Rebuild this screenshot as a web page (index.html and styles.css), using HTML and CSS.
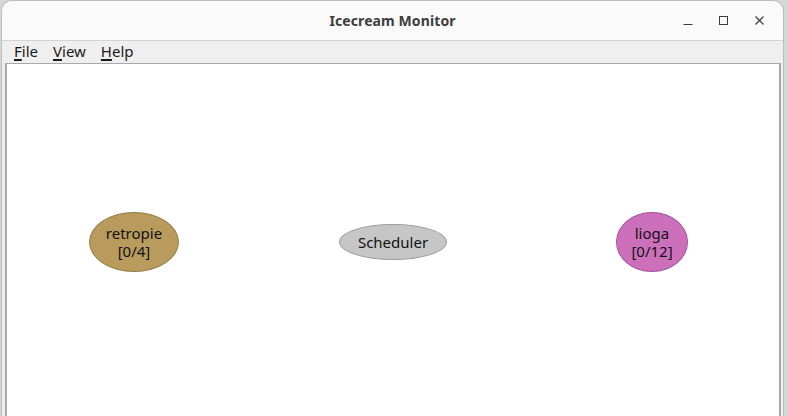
FILE: index.html
```html
<!DOCTYPE html>
<html>
<head>
<meta charset="utf-8">
<link rel="stylesheet" href="styles.css">
</head>
<body>
<div class="window">
  <div class="titlebar">
    <div class="title">Icecream Monitor</div>
    <div class="controls">
      <svg class="ctl" width="12" height="12" viewBox="0 0 12 12"><path d="M1.5 9.5h9" stroke="#3d3d3d" stroke-width="1"/></svg>
      <svg class="ctl" width="12" height="12" viewBox="0 0 12 12"><rect x="1.5" y="1.5" width="8" height="8" fill="none" stroke="#3d3d3d" stroke-width="1"/></svg>
      <svg class="ctl" width="12" height="12" viewBox="0 0 12 12"><path d="M1.5 1.5l8 8M9.5 1.5l-8 8" stroke="#3d3d3d" stroke-width="1.2"/></svg>
    </div>
  </div>
  <div class="menubar">
    <span class="menu"><u>F</u>ile</span>
    <span class="menu"><u>V</u>iew</span>
    <span class="menu"><u>H</u>elp</span>
  </div>
  <div class="canvas">
    <div class="node node-retropie">retropie<br>[0/4]</div>
    <div class="node node-scheduler">Scheduler</div>
    <div class="node node-lioga">lioga<br>[0/12]</div>
  </div>
</div>
</body>
</html>
```
FILE: styles.css
```css
html, body {
  margin: 0;
  padding: 0;
  background: #d6d6d6;
  width: 788px;
  height: 416px;
  overflow: hidden;
}
.window {
  position: relative;
  margin-left: 1px;
  width: 783px;
  height: 430px;
  background: #efefef;
  border-radius: 11px 11px 0 0;
  border: 1px solid #bdbdbd;
  border-bottom: none;
  box-sizing: border-box;
  display: flex;
  flex-direction: column;
  overflow: hidden;
  font-family: "Noto Sans", "DejaVu Sans", sans-serif;
}
.titlebar {
  height: 39px;
  background: #fafafa;
  border-bottom: 1px solid #d3d3d3;
  display: flex;
  align-items: center;
  justify-content: center;
  position: relative;
  flex: none;
}
.title {
  font-weight: bold;
  font-size: 14px;
  color: #3d3d3d;
  letter-spacing: 0.1px;
}
.controls {
  position: absolute;
  right: 17px;
  top: 14px;
  display: flex;
  gap: 24px;
}
.ctl { display: block; }
.menubar {
  height: 22px;
  display: flex;
  align-items: center;
  padding-left: 12px;
  padding-bottom: 3px;
  box-sizing: border-box;
  gap: 15px;
  font-size: 15px;
  color: #1a1a1a;
  flex: none;
}
.menu u {
  text-decoration-thickness: 2px;
  text-underline-offset: 2px;
}
.canvas {
  position: relative;
  margin: 0 2px 0 3px;
  background: #ffffff;
  border-left: 2px solid #a9a9a9;
  border-right: 2px solid #a9a9a9;
  border-top: 1px solid #a9a9a9;
  flex: 1;
}
.node {
  position: absolute;
  box-sizing: border-box;
  border-radius: 50%;
  border: 1px solid;
  display: flex;
  align-items: center;
  justify-content: center;
  text-align: center;
  font-size: 15px;
  line-height: 18px;
  color: #111111;
}
.node-retropie {
  left: 82px;
  top: 148px;
  width: 90px;
  height: 60px;
  background: #b89b5d;
  border-color: #977d45;
}
.node-scheduler {
  left: 332px;
  top: 160px;
  width: 108px;
  height: 36px;
  background: #c6c6c6;
  border-color: #9e9e9e;
}
.node-lioga {
  left: 609px;
  top: 148px;
  width: 72px;
  height: 60px;
  background: #cd70bc;
  border-color: #a6529a;
}
```
